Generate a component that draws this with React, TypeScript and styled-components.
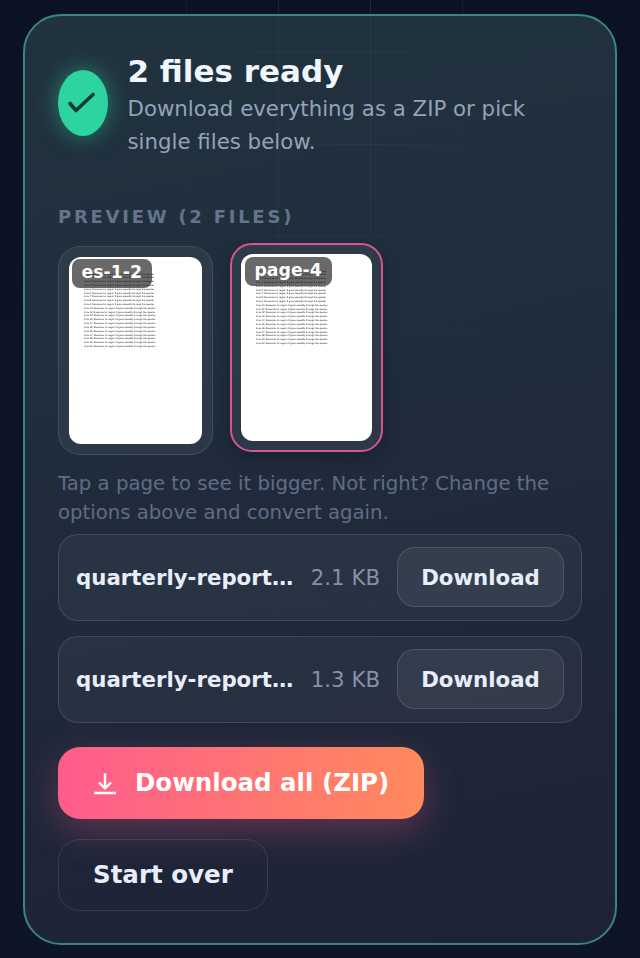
import React from "react";
import styled, { createGlobalStyle } from "styled-components";

const GlobalStyle = createGlobalStyle`
  html, body {
    margin: 0;
    padding: 0;
    background: #0b1223;
    font-family: "DejaVu Sans", sans-serif;
  }
  * {
    box-sizing: border-box;
  }
`;

const Page = styled.div`
  position: relative;
  height: 958px;
  padding: 14px 23px 13px 23px;
  overflow: hidden;
  background: linear-gradient(180deg, #0b1223 0%, #0e1527 100%);

  &::before {
    content: "";
    position: absolute;
    inset: 0;
    background-image:
      linear-gradient(rgba(110, 200, 190, 0.16) 1px, transparent 1px),
      linear-gradient(90deg, rgba(110, 200, 190, 0.16) 1px, transparent 1px);
    background-size: 92px 92px;
    background-position: 2px -40px;
    mask-image: radial-gradient(ellipse 240px 640px at 340px 120px, #000 15%, transparent 100%);
  }
`;

const Card = styled.main`
  position: relative;
  height: 931px;
  padding: 33.5px 33px 34px;
  border: 2px solid #3a8580;
  border-radius: 38px;
  background: linear-gradient(168deg, rgba(42, 65, 75, 0.7) 0%, rgba(36, 50, 66, 0.8) 45%, #1e2236 100%);
`;

const Head = styled.header`
  display: flex;
  align-items: center;
  gap: 19.5px;
`;

const CheckBadge = styled.div`
  display: flex;
  align-items: center;
  justify-content: center;
  flex: 0 0 50px;
  height: 66px;
  margin-bottom: 2px;
  border-radius: 50%;
  background: #2dd4a0;
  box-shadow: 0 0 22px rgba(45, 212, 160, 0.5);
  color: #123a3a;
`;

const Title = styled.h1`
  margin: 0;
  font-size: 31px;
  line-height: 42px;
  font-weight: 700;
  color: #f0f6fc;
`;

const Sub = styled.p`
  margin: 0;
  font-size: 21.3px;
  line-height: 33px;
  color: #93a3b8;
`;

const SectionLabel = styled.h2`
  margin: 47px 0 0;
  font-size: 18px;
  line-height: 24px;
  font-weight: 700;
  letter-spacing: 2.75px;
  color: #64748b;
`;

const Thumbs = styled.div`
  display: flex;
  align-items: flex-start;
  gap: 17px;
  margin-top: 17px;
`;

const Thumb = styled.button<{ $selected?: boolean }>`
  position: relative;
  display: block;
  width: ${({ $selected }) => ($selected ? "153px" : "155px")};
  height: 209px;
  padding: ${({ $selected }) => ($selected ? "9px" : "10px")};
  border: ${({ $selected }) => ($selected ? "2px solid #d9558e" : "1.5px solid rgba(255, 255, 255, 0.1)")};
  border-radius: 22px;
  background: rgba(255, 255, 255, 0.06);
  transform: translateY(${({ $selected }) => ($selected ? "-3px" : "0")});
  box-shadow: ${({ $selected }) => ($selected ? "0 6px 16px rgba(10, 15, 30, 0.35)" : "none")};
  font-family: inherit;
`;

const Sheet = styled.div`
  height: 100%;
  padding: 16px 14px 0 15px;
  border-radius: 12px;
  background: #fff;
  overflow: hidden;
`;

const SheetLine = styled.div`
  font-family: "Liberation Sans", sans-serif;
  font-size: 2.55px;
  line-height: 3.82px;
  color: #222;
  opacity: 0.99;
  text-rendering: geometricPrecision;
  white-space: nowrap;
  text-align: left;
`;

const ThumbTag = styled.span`
  position: absolute;
  top: 12.5px;
  left: 12.5px;
  height: 29px;
  padding: 0 10px;
  border-radius: 8px;
  background: rgba(20, 20, 20, 0.64);
  color: #fff;
  font-size: 17.3px;
  line-height: 26px;
  font-weight: 700;
`;

const Hint = styled.p`
  margin: 14px 0 0;
  font-size: 19.7px;
  line-height: 29px;
  color: #5f6d86;
`;

const FileList = styled.div`
  display: flex;
  flex-direction: column;
  gap: 15px;
  margin-top: 7px;
`;

const FileRow = styled.div`
  display: flex;
  align-items: center;
  gap: 17px;
  height: 87px;
  padding: 0 17px;
  border: 1.5px solid rgba(255, 255, 255, 0.12);
  border-radius: 20px;
  background: rgba(255, 255, 255, 0.045);
`;

const FileName = styled.span`
  flex: 1;
  min-width: 0;
  overflow: hidden;
  white-space: nowrap;
  text-overflow: ellipsis;
  font-size: 21.3px;
  font-weight: 700;
  color: #e8eef9;
`;

const FileSize = styled.span`
  flex: none;
  font-size: 21.3px;
  color: #8492a8;
`;

const SmallButton = styled.button`
  flex: none;
  width: 167px;
  height: 60px;
  border: 1.5px solid rgba(255, 255, 255, 0.13);
  border-radius: 18px;
  background: rgba(255, 255, 255, 0.06);
  color: #e8eef9;
  font-family: inherit;
  font-size: 21.3px;
  font-weight: 700;
`;

const Actions = styled.div`
  display: flex;
  flex-direction: column;
  align-items: flex-start;
  gap: 20px;
  margin-top: 24px;
`;

const PrimaryButton = styled.button`
  display: flex;
  align-items: center;
  gap: 18px;
  height: 72px;
  padding: 0 35px;
  border: 0;
  border-radius: 22px;
  background: linear-gradient(90deg, #ff5c8d 0%, #ff8a5c 100%);
  box-shadow: 0 12px 36px rgba(255, 92, 141, 0.28);
  color: #fff;
  font-family: inherit;
  font-size: 24.5px;
  font-weight: 700;
`;

const GhostButton = styled.button`
  height: 72px;
  padding: 0 34px;
  border: 1.5px solid rgba(255, 255, 255, 0.1);
  border-radius: 22px;
  background: transparent;
  color: #e8eef9;
  font-family: inherit;
  font-size: 24.5px;
  font-weight: 700;
`;

const pageLines = Array.from(
  { length: 20 },
  (_, i) => `Line ${i + 1}: Revenue for region 3 grew steadily through the quarter`
);

const files = [
  { name: "quarterly-report-pages-1-2.pdf", size: "2.1 KB" },
  { name: "quarterly-report-page-4.pdf", size: "1.3 KB" },
];

const App = () => (
  <Page>
    <GlobalStyle />
    <Card>
      <Head>
        <CheckBadge>
          <svg width="30" height="22" viewBox="0 0 30 22" fill="none" stroke="currentColor" strokeWidth="3.6" strokeLinecap="round" strokeLinejoin="round">
            <path d="M2 11.5 8 18.5 25 2.5" />
          </svg>
        </CheckBadge>
        <div>
          <Title>2 files ready</Title>
          <Sub>Download everything as a ZIP or pick single files below.</Sub>
        </div>
      </Head>

      <SectionLabel>PREVIEW (2 FILES)</SectionLabel>
      <Thumbs>
        <Thumb>
          <Sheet>
            {pageLines.map((line) => (
              <SheetLine key={line}>{line}</SheetLine>
            ))}
          </Sheet>
          <ThumbTag>es-1-2</ThumbTag>
        </Thumb>
        <Thumb $selected>
          <Sheet>
            {pageLines.map((line) => (
              <SheetLine key={line}>{line}</SheetLine>
            ))}
          </Sheet>
          <ThumbTag>page-4</ThumbTag>
        </Thumb>
      </Thumbs>
      <Hint>Tap a page to see it bigger. Not right? Change the options above and convert again.</Hint>

      <FileList>
        {files.map((file) => (
          <FileRow key={file.name}>
            <FileName>{file.name}</FileName>
            <FileSize>{file.size}</FileSize>
            <SmallButton>Download</SmallButton>
          </FileRow>
        ))}
      </FileList>

      <Actions>
        <PrimaryButton>
          <svg width="24" height="24" viewBox="0 0 24 24" fill="none" stroke="currentColor" strokeWidth="2.4" strokeLinejoin="round">
            <path d="M12 2.5V17.5M6 11.5l6 6 6-6M1 22h22" />
          </svg>
          Download all (ZIP)
        </PrimaryButton>
        <GhostButton>Start over</GhostButton>
      </Actions>
    </Card>
  </Page>
);

export default App;
